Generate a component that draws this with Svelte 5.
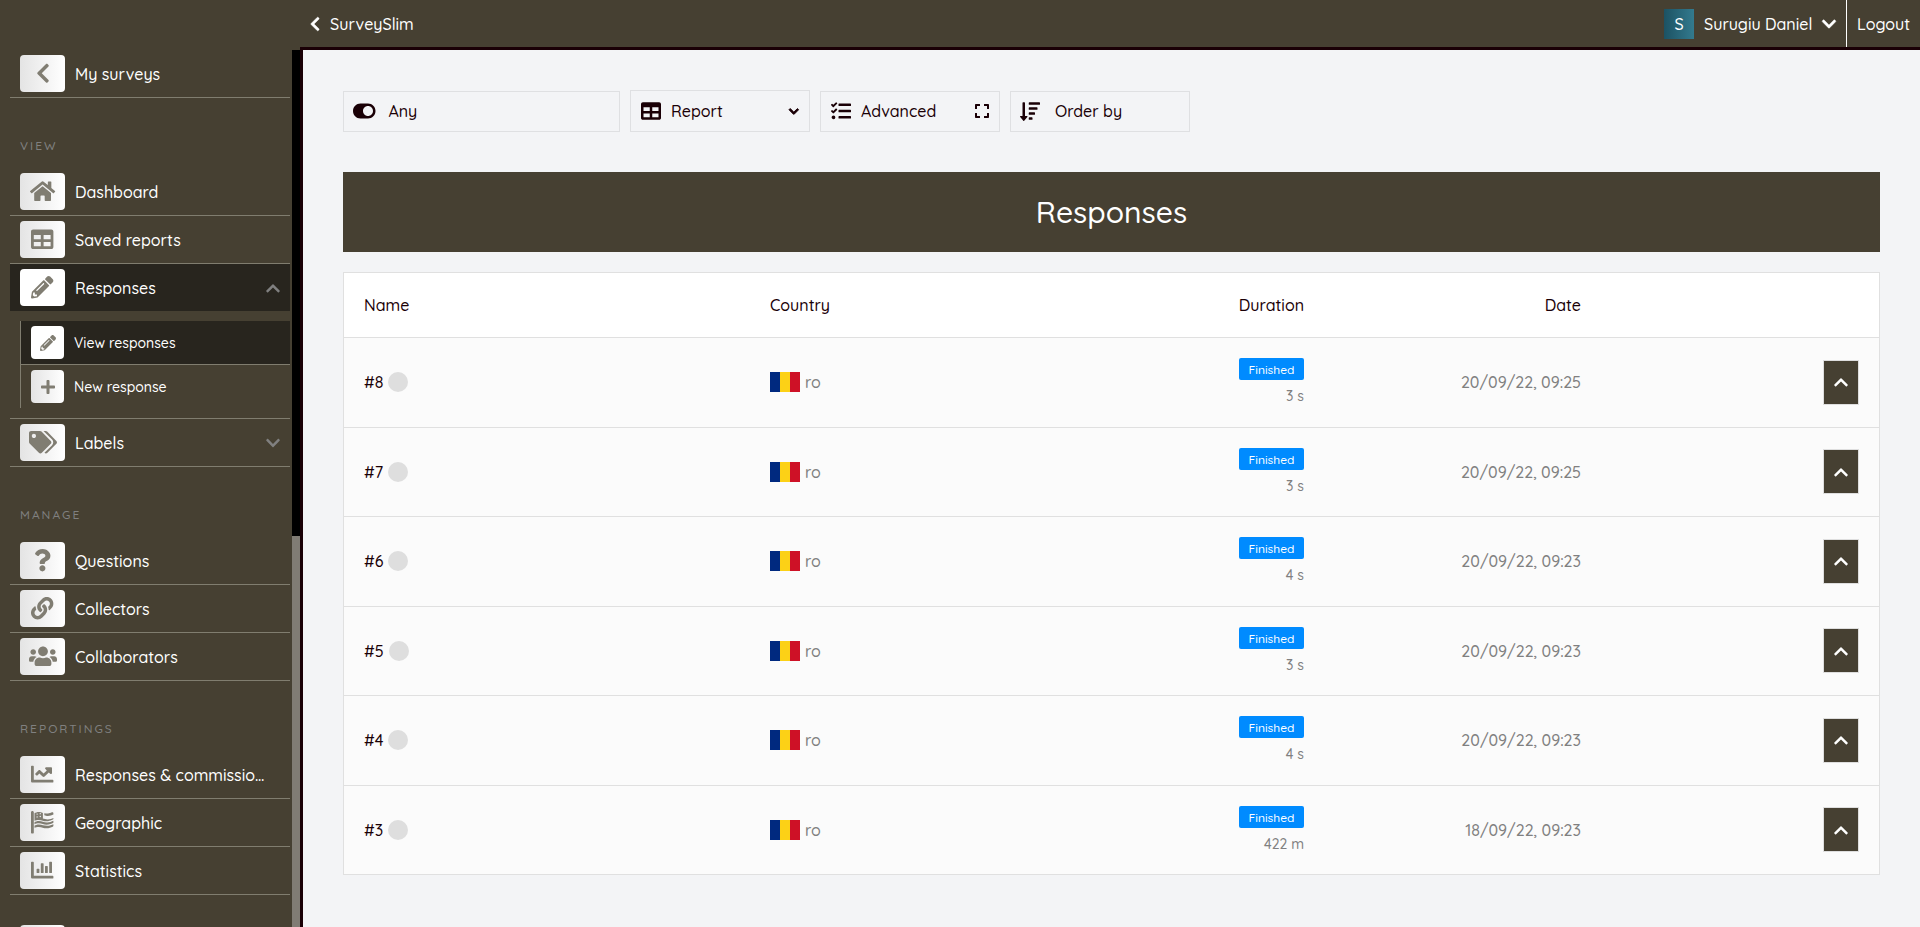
<script>
  const icons = {
    back: { w: 320, d: 'M34.5 239 228.900 44.700c9.400-9.400 24.600-9.400 33.900 0l22.700 22.700c9.400 9.400 9.400 24.500 0 33.900L131.500 256l154 154.700c9.300 9.400 9.300 24.500 0 33.900l-22.700 22.700c-9.400 9.400-24.600 9.400-33.900 0L34.500 273c-9.400-9.400-9.400-24.600 0-34z' },
    home: { w: 576, d: 'M280.400 148.300 96 300.100V464a16 16 0 0 0 16 16l112.100-.3a16 16 0 0 0 15.900-16V368a16 16 0 0 1 16-16h64a16 16 0 0 1 16 16v95.600a16 16 0 0 0 16 16.100L464 480a16 16 0 0 0 16-16V300L295.700 148.300a12.200 12.200 0 0 0-15.300 0zM571.600 251.500 488 182.600V44.100a12 12 0 0 0-12-12h-56a12 12 0 0 0-12 12v72.600L318.500 43a48 48 0 0 0-61 0L4.300 251.500a12 12 0 0 0-1.600 16.900l25.500 31a12 12 0 0 0 16.900 1.600l235.200-193.700a12.200 12.200 0 0 1 15.300 0L530.900 301a12 12 0 0 0 16.900-1.600l25.500-31a12 12 0 0 0-1.700-16.900z' },
    table: { w: 512, d: 'M464 32H48C21.500 32 0 53.500 0 80v352c0 26.500 21.500 48 48 48h416c26.500 0 48-21.500 48-48V80c0-26.500-21.500-48-48-48zM224 416H64v-96h160v96zm0-160H64v-96h160v96zm224 160H288v-96h160v96zm0-160H288v-96h160v96z' },
    pencil: { w: 512, d: 'M497.900 142.100l-46.100 46.100c-4.700 4.700-12.300 4.700-17 0l-111-111c-4.700-4.700-4.700-12.300 0-17l46.100-46.100c18.700-18.700 49.100-18.700 67.900 0l60.100 60.100c18.800 18.700 18.800 49.100 0 67.900zM284.200 99.800L21.600 362.400.4 483.900c-2.900 16.400 11.400 30.600 27.800 27.800l121.500-21.300 262.600-262.600c4.700-4.700 4.700-12.300 0-17l-111-111c-4.800-4.700-12.400-4.700-17.100 0zM124.100 339.900c-5.500-5.500-5.500-14.300 0-19.800l154-154c5.500-5.500 14.300-5.500 19.800 0s5.500 14.300 0 19.800l-154 154c-5.500 5.500-14.300 5.500-19.800 0zM88 424h48v36.300l-64.500 11.300-31.100-31.100L51.700 376H88v48z' },
    plus: { w: 448, d: 'M416 208H272V64c0-17.700-14.300-32-32-32h-32c-17.700 0-32 14.300-32 32v144H32c-17.700 0-32 14.300-32 32v32c0 17.700 14.300 32 32 32h144v144c0 17.700 14.300 32 32 32h32c17.700 0 32-14.300 32-32V304h144c17.700 0 32-14.300 32-32v-32c0-17.700-14.300-32-32-32z' },
    tags: { w: 640, d: 'M497.900 225.900L286.100 14.100A48 48 0 0 0 252.100 0H48C21.500 0 0 21.500 0 48v204.100a48 48 0 0 0 14.100 33.900l211.800 211.800c18.700 18.700 49.100 18.700 67.900 0l204.100-204.100c18.800-18.700 18.800-49.100 0-67.800zM112 160c-26.500 0-48-21.500-48-48s21.500-48 48-48 48 21.500 48 48-21.500 48-48 48zm513.900 133.800L421.800 497.900c-18.700 18.700-49.100 18.700-67.900 0l-.4-.4L527.600 323.500c17-17 26.400-39.600 26.400-63.600s-9.400-46.600-26.400-63.600L331.400 0h48.700a48 48 0 0 1 33.900 14.100l211.900 211.900c18.700 18.700 18.700 49.100 0 67.800z' },
    question: { w: 384, d: 'M202 0C122.500 0 69.500 32.500 27.900 90.500c-7.500 10.500-5.300 25.100 5 32.900l43.100 32.700c10.400 7.900 25.100 6 33.300-4.100 25-31 43.600-48.800 82.700-48.800 30.800 0 68.800 19.800 68.800 49.600 0 22.500-18.600 34.100-49 51.100-35.400 19.900-82.300 44.600-82.300 106.400V320c0 13.300 10.700 24 24 24h72.500c13.300 0 24-10.700 24-24v-5.800c0-42.900 125.300-44.600 125.300-160.600C375.300 66.300 284.700 0 202 0zM192 373.500c-38.200 0-69.300 31.100-69.300 69.300S153.800 512 192 512s69.300-31.100 69.300-69.300-31.100-69.200-69.300-69.200z' },
    link: { w: 512, d: 'M326.600 185.400c59.700 59.800 58.900 155.700.4 214.600-.1.100-.2.300-.4.400l-67.200 67.200c-59.300 59.300-155.700 59.300-215 0-59.300-59.300-59.300-155.700 0-215l37.100-37.100c9.800-9.800 26.800-3.300 27.300 10.600.6 17.700 3.800 35.500 9.700 52.700 2 5.800.6 12.300-3.800 16.600l-13.100 13.100c-28 28-28.900 73.700-1.200 102 28 28.600 74.100 28.700 102.300.5l67.200-67.200c28.200-28.200 28.100-73.800 0-101.800-3.700-3.700-7.400-6.600-10.300-8.600a16 16 0 0 1-6.900-12.600c-.4-10.600 3.300-21.500 11.700-29.800l21.100-21.100c5.500-5.500 14.200-6.200 20.600-1.700a152.500 152.500 0 0 1 20.500 17.200zM467.500 44.400c-59.300-59.300-155.700-59.300-215 0l-67.200 67.200c-.1.100-.3.300-.4.400-58.600 58.900-59.400 154.800.4 214.600a152.500 152.500 0 0 0 20.500 17.200c6.400 4.500 15.100 3.800 20.600-1.700l21.100-21.100c8.400-8.400 12.100-19.200 11.700-29.800a16 16 0 0 0-6.900-12.600c-2.900-2-6.600-4.900-10.300-8.600-28.100-28.100-28.200-73.600 0-101.800l67.200-67.200c28.200-28.200 74.300-28.100 102.300.5 27.800 28.300 26.800 73.900-1.200 102l-13.100 13.100c-4.400 4.400-5.800 10.800-3.800 16.600 5.900 17.200 9 35 9.700 52.700.5 13.900 17.500 20.400 27.300 10.600l37.100-37.100c59.300-59.300 59.300-155.700 0-215z' },
    users: { w: 640, d: 'M96 224c35.300 0 64-28.700 64-64s-28.700-64-64-64-64 28.700-64 64 28.700 64 64 64zm448 0c35.300 0 64-28.700 64-64s-28.700-64-64-64-64 28.700-64 64 28.700 64 64 64zm32 32h-64c-17.600 0-33.500 7.100-45.100 18.600 40.300 22.100 68.900 62 75.100 109.400h66c17.700 0 32-14.300 32-32v-32c0-35.300-28.700-64-64-64zm-256 0c61.900 0 112-50.100 112-112S381.900 32 320 32 208 82.100 208 144s50.100 112 112 112zm76.800 32h-8.300c-20.800 10-43.900 16-68.500 16s-47.600-6-68.500-16h-8.300C179.600 288 128 339.600 128 403.200V432c0 26.500 21.500 48 48 48h288c26.500 0 48-21.500 48-48v-28.800c0-63.600-51.600-115.200-115.200-115.200zm-223.700-13.400C161.500 263.100 145.600 256 128 256H64c-35.300 0-64 28.700-64 64v32c0 17.700 14.300 32 32 32h65.900c6.300-47.400 34.900-87.300 75.200-109.400z' },
    line: { w: 512, d: 'M496 384H64V80c0-8.800-7.200-16-16-16H16C7.200 64 0 71.200 0 80v336c0 17.700 14.300 32 32 32h464c8.800 0 16-7.200 16-16v-32c0-8.800-7.200-16-16-16zM464 96H345.900c-21.400 0-32.100 25.900-17 41l32.400 32.400L288 242.800l-73.400-73.400c-12.500-12.500-32.800-12.500-45.300 0l-68.700 68.700c-6.200 6.200-6.200 16.400 0 22.600l22.600 22.600c6.200 6.200 16.400 6.200 22.600 0L192 237.300l73.400 73.400c12.500 12.500 32.800 12.500 45.300 0l96-96 32.400 32.400c15.100 15.100 41 4.400 41-17V112c-.1-8.800-7.300-16-16.100-16z' },
    flag: { w: 512, d: 'M32 0C14.300 0 0 14.300 0 32v464c0 8.800 7.200 16 16 16h32c8.800 0 16-7.200 16-16V32C64 14.300 49.700 0 32 0zM80 78v145c24-10 54-20 95-20 75 0 115 32 180 32 50 0 86-15 120-29 21-8 37-13 37-31v-16c-35 16-78 34-132 34-44 0-77-12-108-20V44c-37-11-64-21-97-21-38 0-67 15-95 29v26zm60 9a16 16 0 1 1 0-32 16 16 0 0 1 0 32zm0 64a16 16 0 1 1 0-32 16 16 0 0 1 0 32zm72-74a16 16 0 1 1 0-32 16 16 0 0 1 0 32zm0 64a16 16 0 1 1 0-32 16 16 0 0 1 0 32zM304 52v43c28 9 50 17 84 17 49 0 88-17 124-34V50c0-18-20-28-36-19-28 15-58 28-88 28-32 0-52-2-84-7zM80 260v43c26-11 55-21 98-21 71 0 111 32 177 32 66 0 117-26 157-45v-45c-39 19-86 39-144 39-77 0-113-32-190-32-42 0-74 14-98 29zm0 80v45c26-12 54-21 98-21 70 0 109 32 177 32 57 0 105-21 142-38 10-4 15-11 15-21v-32c-40 18-86 35-144 35-77 0-114-30-190-30-41 0-74 14-98 30z' },
    bars: { w: 512, d: 'M332.800 320h38.400c6.400 0 12.800-6.400 12.800-12.800V172.800c0-6.400-6.400-12.800-12.800-12.800h-38.400c-6.400 0-12.800 6.400-12.800 12.800v134.400c0 6.400 6.400 12.800 12.800 12.800zm96 0h38.400c6.400 0 12.800-6.400 12.800-12.800V76.800c0-6.400-6.400-12.800-12.800-12.800h-38.400c-6.400 0-12.800 6.400-12.800 12.800v230.400c0 6.400 6.400 12.800 12.800 12.800zm-288 0h38.400c6.400 0 12.800-6.400 12.800-12.800v-70.400c0-6.400-6.400-12.800-12.800-12.800h-38.400c-6.400 0-12.800 6.400-12.800 12.800v70.400c0 6.400 6.400 12.800 12.800 12.800zm96 0h38.400c6.400 0 12.800-6.400 12.800-12.800V108.800c0-6.400-6.400-12.800-12.800-12.800h-38.400c-6.400 0-12.800 6.400-12.800 12.800v198.400c0 6.400 6.400 12.800 12.800 12.800zM496 384H64V80c0-8.800-7.200-16-16-16H16C7.200 64 0 71.200 0 80v336c0 17.700 14.300 32 32 32h464c8.800 0 16-7.200 16-16v-32c0-8.800-7.200-16-16-16z' },
    toggle: { w: 576, d: 'M384 64H192C86 64 0 150 0 256s86 192 192 192h192c106 0 192-86 192-192S490 64 384 64zm0 320c-70.700 0-128-57.200-128-128 0-70.700 57.200-128 128-128 70.700 0 128 57.200 128 128 0 70.700-57.200 128-128 128z' },
    tasks: { w: 512, d: 'M139.600 35.500a12 12 0 0 0-17 0L58.900 98.800l-22.700-22.100a12 12 0 0 0-17 0L3.500 92.400a12 12 0 0 0 0 17l47.600 47.400a12.800 12.800 0 0 0 17.600 0l15.600-15.600L156.500 69a12 12 0 0 0 .1-17zm0 159.200a12 12 0 0 0-17 0l-63.700 63.700-22.700-22.100a12 12 0 0 0-17 0L3.500 252a12 12 0 0 0 0 17L51 316.500a12.800 12.800 0 0 0 17.600 0l15.700-15.700 72.200-72.200a12 12 0 0 0 .1-16.900zM64 368c-26.500 0-48.600 21.500-48.600 48S37.500 464 64 464a48 48 0 0 0 0-96zm432 16H208a16 16 0 0 0-16 16v32a16 16 0 0 0 16 16h288a16 16 0 0 0 16-16v-32a16 16 0 0 0-16-16zm0-320H208a16 16 0 0 0-16 16v32a16 16 0 0 0 16 16h288a16 16 0 0 0 16-16V80a16 16 0 0 0-16-16zm0 160H208a16 16 0 0 0-16 16v32a16 16 0 0 0 16 16h288a16 16 0 0 0 16-16v-32a16 16 0 0 0-16-16z' },
    expand: { w: 448, d: 'M0 180V56c0-13.300 10.700-24 24-24h124c6.600 0 12 5.400 12 12v40c0 6.600-5.400 12-12 12H64v84c0 6.600-5.400 12-12 12H12c-6.600 0-12-5.400-12-12zM288 44v40c0 6.600 5.400 12 12 12h84v84c0 6.600 5.400 12 12 12h40c6.600 0 12-5.400 12-12V56c0-13.300-10.700-24-24-24H300c-6.600 0-12 5.400-12 12zm148 276h-40c-6.600 0-12 5.400-12 12v84h-84c-6.600 0-12 5.400-12 12v40c0 6.600 5.400 12 12 12h124c13.300 0 24-10.700 24-24V332c0-6.600-5.400-12-12-12zM160 468v-40c0-6.600-5.400-12-12-12H64v-84c0-6.600-5.400-12-12-12H12c-6.600 0-12 5.400-12 12v124c0 13.300 10.700 24 24 24h124c6.600 0 12-5.400 12-12z' },
    sort: { w: 512, d: 'M240 96h256a16 16 0 0 0 16-16V48a16 16 0 0 0-16-16H240a16 16 0 0 0-16 16v32a16 16 0 0 0 16 16zm0 128h192a16 16 0 0 0 16-16v-32a16 16 0 0 0-16-16H240a16 16 0 0 0-16 16v32a16 16 0 0 0 16 16zm64 192h-64a16 16 0 0 0-16 16v32a16 16 0 0 0 16 16h64a16 16 0 0 0 16-16v-32a16 16 0 0 0-16-16zm-48-64h-16a16 16 0 0 1-16-16v-32a16 16 0 0 1 16-16h128a16 16 0 0 1 16 16v32a16 16 0 0 1-16 16zm-80 32h-48V48a16 16 0 0 0-16-16H80a16 16 0 0 0-16 16v336H16c-14.200 0-21.400 17.200-11.300 27.300l80 96a16 16 0 0 0 22.600 0l80-96c10.100-10.100 2.900-27.300-11.300-27.300z' },
    up: { w: 448, d: 'M240.900 141.500 435.300 335.900c9.400 9.400 9.400 24.600 0 33.900l-22.700 22.700c-9.400 9.400-24.500 9.400-33.900 0L224 238.500 69.300 392.500c-9.400 9.300-24.500 9.300-33.900 0l-22.700-22.700c-9.400-9.400-9.400-24.600 0-33.900L207 141.500c9.400-9.400 24.600-9.400 33.900 0z' },
    down: { w: 448, d: 'M207 381.500 12.700 187.100c-9.400-9.400-9.400-24.600 0-33.900l22.700-22.700c9.400-9.400 24.500-9.400 33.900 0L224 284.500l154.700-154c9.400-9.300 24.500-9.300 33.900 0l22.700 22.700c9.400 9.400 9.400 24.600 0 33.900L240.900 381.500c-9.400 9.400-24.600 9.400-33.900 0z' }
  };

  const top = [{ icon: 'back', label: 'My surveys' }];
  const groups = [
    { title: 'VIEW', items: [
      { icon: 'home', label: 'Dashboard' },
      { icon: 'table', label: 'Saved reports' },
      { icon: 'pencil', label: 'Responses', active: true, caret: 'up', children: [
        { icon: 'pencil', label: 'View responses', active: true },
        { icon: 'plus', label: 'New response' }
      ] },
      { icon: 'tags', label: 'Labels', caret: 'down' }
    ] },
    { title: 'MANAGE', items: [
      { icon: 'question', label: 'Questions' },
      { icon: 'link', label: 'Collectors' },
      { icon: 'users', label: 'Collaborators' }
    ] },
    { title: 'REPORTINGS', items: [
      { icon: 'line', label: 'Responses & commissio…' },
      { icon: 'flag', label: 'Geographic' },
      { icon: 'bars', label: 'Statistics' }
    ] }
  ];

  const rows = [
    { id: '#8', duration: '3 s', date: '20/09/22, 09:25' },
    { id: '#7', duration: '3 s', date: '20/09/22, 09:25' },
    { id: '#6', duration: '4 s', date: '20/09/22, 09:23' },
    { id: '#5', duration: '3 s', date: '20/09/22, 09:23' },
    { id: '#4', duration: '4 s', date: '20/09/22, 09:23' },
    { id: '#3', duration: '422 m', date: '18/09/22, 09:23' }
  ];
</script>

{#snippet glyph(name, size)}
  <svg class="glyph" viewBox="0 0 {icons[name].w} 512" height={size} width={(size * icons[name].w) / 512} aria-hidden="true"><path d={icons[name].d} /></svg>
{/snippet}

{#snippet entry(item)}
  <li>
    <a class="entry" class:active={item.active} href="#top">
      <span class="tile">{@render glyph(item.icon, 22.4)}</span>
      <span class="label">{item.label}</span>
      {#if item.caret}<span class="caret">{@render glyph(item.caret, 16)}</span>{/if}
    </a>
    {#if item.children}
      <ul class="sub">
        {#each item.children as child}
          <li>
            <a class="entry small" class:active={child.active} href="#top">
              <span class="tile">{@render glyph(child.icon, 16)}</span>
              <span class="label">{child.label}</span>
            </a>
          </li>
        {/each}
      </ul>
    {/if}
  </li>
{/snippet}

<div class="app">
  <header>
    <a class="brand" href="#top">{@render glyph('back', 16)}<span>SurveySlim</span></a>
    <div class="account">
      <span class="avatar">S</span>
      <span class="user">Surugiu Daniel</span>
      {@render glyph('down', 16)}
      <a class="logout" href="#top">Logout</a>
    </div>
  </header>

  <div class="body">
    <aside>
      <nav>
        <ul>{#each top as item}{@render entry(item)}{/each}</ul>
        {#each groups as group}
          <h2>{group.title}</h2>
          <ul>{#each group.items as item}{@render entry(item)}{/each}</ul>
        {/each}
        <div class="next"><span class="tile"></span></div>
      </nav>
      <div class="scroll"><div class="thumb"></div></div>
    </aside>

    <main>
      <div class="filters">
        <div class="filter any">{@render glyph('toggle', 20)}<span>Any</span></div>
        <div class="filter report">{@render glyph('table', 20)}<span>Report</span><i>{@render glyph('down', 11)}</i></div>
        <div class="filter">{@render glyph('tasks', 20)}<span>Advanced</span><i>{@render glyph('expand', 16)}</i></div>
        <div class="filter order">{@render glyph('sort', 20)}<span>Order by</span></div>
      </div>

      <h1>Responses</h1>

      <section class="table">
        <div class="row head">
          <span>Name</span><span>Country</span><span class="right">Duration</span><span class="right">Date</span><span></span>
        </div>
        {#each rows as row}
          <div class="row">
            <span class="name"><b>{row.id}</b><i class="dot"></i></span>
            <span class="country"><svg width="30" height="20" viewBox="0 0 3 2"><path fill="#00297f" d="M0 0h1v2H0z" /><path fill="#fcd116" d="M1 0h1v2H1z" /><path fill="#ce1126" d="M2 0h1v2H2z" /></svg>ro</span>
            <span class="duration"><em>Finished</em><small>{row.duration}</small></span>
            <span class="date">{row.date}</span>
            <span class="action"><button aria-label="Expand">{@render glyph('up', 16)}</button></span>
          </div>
        {/each}
      </section>
    </main>
  </div>
</div>

<style>
  :global(body) { margin: 0; overflow: hidden; }
  .app {
    height: 927px; display: flex; flex-direction: column; overflow: hidden;
    background: #464032; color: #1a0006;
    font: 500 16px/20px Quicksand, Lato, sans-serif;
  }
  .app * { box-sizing: border-box; }
  a { color: #fff; text-decoration: none; }
  ul { list-style: none; margin: 0; padding: 0; }
  .glyph { display: block; flex: none; fill: currentColor; overflow: visible; }

  header {
    flex: none; height: 50px; margin-left: 300px; padding-left: 10px;
    display: flex; justify-content: space-between; border-bottom: 3px solid #1a0006; color: #fff;
  }
  header .glyph { stroke: currentColor; stroke-width: 14; }
  .brand { display: flex; align-items: center; gap: 10px; padding-top: 1px; }
  .account { display: flex; align-items: center; }
  .avatar {
    width: 30px; height: 30px; margin-right: 10px; line-height: 30px; text-align: center;
    background: linear-gradient(90deg, #1c5263, #337a8e);
  }
  .user { width: 107px; margin-right: 11px; white-space: nowrap; }
  .logout { display: flex; align-items: center; height: 47px; width: 74px; margin-left: 10px; padding-left: 10px; border-left: 1px solid #fff; }

  .body { flex: 1; display: flex; min-height: 0; }
  aside { flex: none; width: 303px; display: flex; border-right: 3px solid #1a0006; overflow: hidden; }
  nav { width: 292px; padding: 0 2px 0 10px; }
  .scroll { width: 8px; background: #807c74; }
  .thumb { height: 486px; background: #000; }
  nav li { border-bottom: 1px solid #807d6f; }
  .entry { height: 47px; padding: 0 10px; display: flex; align-items: center; gap: 10px; }
  .active { background: #28251e; }
  .tile {
    flex: none; width: 45px; height: 37px; border-radius: 4px; display: flex; align-items: center; justify-content: center;
    background: linear-gradient(90deg, #e4e4e4, #fff); color: #807d72;
  }
  .active .tile { background: #fff; }
  .label { white-space: nowrap; }
  .caret { margin-left: auto; color: #808080; }
  .sub { margin: 10px 0 10px 10px; border-left: 1px solid #807d6f; }
  .sub li:last-child { border: 0; }
  .small { height: 43px; font-size: 14px; }
  .small .tile { width: 33px; height: 33px; }
  h2 { margin: 0; height: 70px; padding: 38px 10px 0; font-size: 12px; font-weight: 500; letter-spacing: 2px; color: #808080; }
  .next { padding: 30px 10px 0; }

  main { flex: 1; min-width: 0; padding: 40px; background: #f3f4f6; }
  .filters { display: flex; align-items: flex-end; gap: 10px; height: 42px; }
  .filter { width: 180px; height: 41px; padding: 0 10px 1px; display: flex; align-items: center; gap: 10px; border: 1px solid #dfe0e2; }
  .filter i { margin-left: auto; }
  .any { width: 277px; gap: 13px; padding-left: 9px; }
  .report { height: 42px; padding-bottom: 0; }
  .report i .glyph { stroke: currentColor; stroke-width: 44; }
  .order { gap: 15px; padding-left: 9px; }

  h1 { margin: 40px 0 20px; height: 80px; background: #464032; color: #fff; font-size: 30px; line-height: 81px; font-weight: 500; text-align: center; }
  .table { border: 1px solid #e0e0e0; background: #fff; }
  .row {
    display: grid; grid-template-columns: 406px 270px 264px 277px 1fr; align-items: center;
    height: 89.5px; padding: 0 20px; background: #fbfbfb; border-top: 1px solid #e0e0e0;
  }
  .head { height: 64px; background: #fff; border: 0; }
  .right { text-align: right; }
  .name, .country { display: flex; align-items: center; gap: 5px; }
  .name b { font-weight: 500; }
  .dot { width: 20px; height: 20px; border-radius: 50%; background: #dedede; }
  .country, .date, .duration { color: #808080; }
  .duration { display: flex; flex-direction: column; align-items: flex-end; gap: 6px; }
  em { width: 65px; height: 22px; border-radius: 2px; background: #008bff; color: #fff; font-size: 12px; font-style: normal; line-height: 23px; text-align: center; }
  small { font-size: 14px; line-height: 20px; }
  .date { text-align: right; }
  .action { display: flex; justify-content: flex-end; }
  button { width: 36px; height: 45px; padding: 0; display: flex; align-items: center; justify-content: center; background: #464032; border: 1px solid #dedede; color: #fff; }
</style>
